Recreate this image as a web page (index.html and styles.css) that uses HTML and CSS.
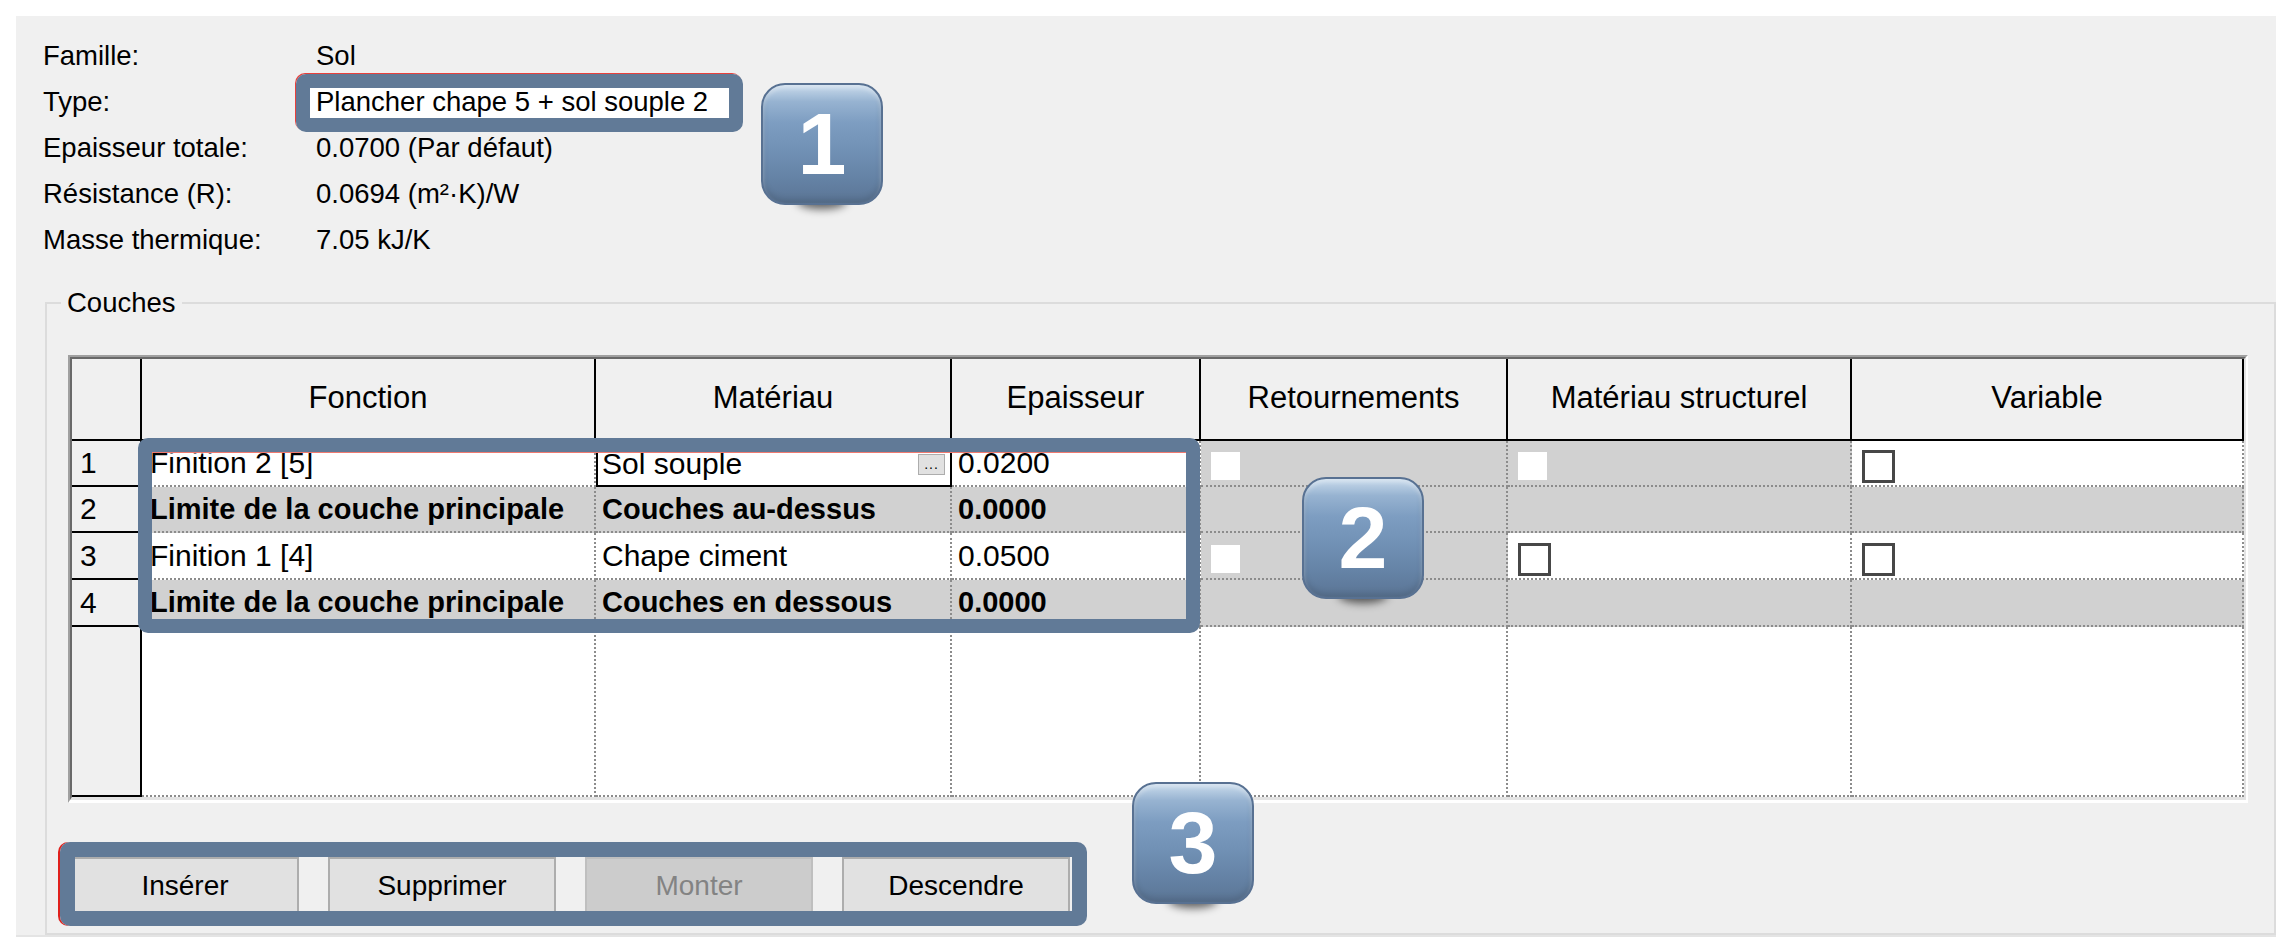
FILE: index.html
```html
<!DOCTYPE html>
<html lang="fr">
<head>
<meta charset="utf-8">
<title>Propriétés du type — Sol</title>
<link rel="stylesheet" href="styles.css">
</head>
<body>
<div class="page">
  <div class="panel">
    <div class="info">
      <div class="lbl">Famille:</div><div class="val">Sol</div>
      <div class="lbl">Type:</div><div class="val"><span class="typefield">Plancher chape 5 + sol souple 2</span></div>
      <div class="lbl">Epaisseur totale:</div><div class="val">0.0700 (Par défaut)</div>
      <div class="lbl">Résistance (R):</div><div class="val">0.0694 (m²·K)/W</div>
      <div class="lbl">Masse thermique:</div><div class="val">7.05 kJ/K</div>
    </div>

    <fieldset class="group">
      <legend class="group-title">Couches</legend>
      <div class="tframe">
        <div class="grid">
          <div class="c rh"></div>
          <div class="c h">Fonction</div>
          <div class="c h">Matériau</div>
          <div class="c h">Epaisseur</div>
          <div class="c h">Retournements</div>
          <div class="c h">Matériau structurel</div>
          <div class="c h">Variable</div>

          <div class="c rh">1</div>
          <div class="c fn">Finition 2 [5]</div>
          <div class="c edit"><span>Sol souple</span><span class="ellipsis">...</span></div>
          <div class="c">0.0200</div>
          <div class="c g chkcell"><span class="chk-off"></span></div>
          <div class="c g chkcell"><span class="chk-off"></span></div>
          <div class="c chkcell"><span class="chk"></span></div>

          <div class="c rh">2</div>
          <div class="c fn g b">Limite de la couche principale</div>
          <div class="c g b">Couches au-dessus</div>
          <div class="c g b">0.0000</div>
          <div class="c g"></div>
          <div class="c g"></div>
          <div class="c g"></div>

          <div class="c rh">3</div>
          <div class="c fn">Finition 1 [4]</div>
          <div class="c">Chape ciment</div>
          <div class="c">0.0500</div>
          <div class="c g chkcell"><span class="chk-off"></span></div>
          <div class="c chkcell"><span class="chk"></span></div>
          <div class="c chkcell"><span class="chk"></span></div>

          <div class="c rh">4</div>
          <div class="c fn g b">Limite de la couche principale</div>
          <div class="c g b">Couches en dessous</div>
          <div class="c g b">0.0000</div>
          <div class="c g"></div>
          <div class="c g"></div>
          <div class="c g"></div>

          <div class="c rh"></div>
          <div class="c"></div>
          <div class="c"></div>
          <div class="c"></div>
          <div class="c"></div>
          <div class="c"></div>
          <div class="c"></div>
        </div>
      </div>

      <div class="buttons">
        <button class="btn" type="button">Insérer</button>
        <button class="btn" type="button">Supprimer</button>
        <button class="btn btn-disabled" type="button" disabled>Monter</button>
        <button class="btn" type="button">Descendre</button>
      </div>
    </fieldset>
  </div>

  <div class="hl hl-type"></div>
  <div class="hl hl-layers"></div>
  <div class="hl hl-buttons"></div>

  <div class="badge badge-1"><div class="badge-face">1</div></div>
  <div class="badge badge-2"><div class="badge-face">2</div></div>
  <div class="badge badge-3"><div class="badge-face">3</div></div>
</div>
</body>
</html>
```

FILE: styles.css
```css
* { box-sizing: border-box; }

html, body {
  margin: 0;
  padding: 0;
  background: #ffffff;
}

body {
  font-family: "Liberation Sans", Arial, sans-serif;
  color: #000000;
}

.page {
  position: relative;
  width: 2292px;
  height: 952px;
  padding: 16px 0 0 16px;
  overflow: hidden;
}

.panel {
  width: 2260px;
  background: #f0f0f0;
  padding: 17px 0 0 0;
  border-bottom: 2px solid #e4e4e4;
}

/* ---------- header info ---------- */
.info {
  display: grid;
  grid-template-columns: 273px auto;
  padding-left: 27px;
  font-size: 27.5px;
  line-height: 46px;
}

.lbl,
.val {
  height: 46px;
  white-space: nowrap;
}

.val {
  display: flex;
  align-items: center;
}

.typefield {
  display: block;
  width: 432px;
  height: 40px;
  line-height: 40px;
  margin-left: -12px;
  padding-left: 12px;
  background: #ffffff;
}

/* ---------- group box ---------- */
.group {
  margin: 25px 0 0 29px;
  padding: 37px 24px 19px 21px;
  border: 2px solid #dcdcdc;
  min-width: 0;
}

.group-title {
  font-size: 27.5px;
  line-height: 30px;
  padding: 0 6px;
  margin-left: -7px;
}

/* ---------- table ---------- */
.tframe {
  width: 2180px;
  border-style: solid;
  border-width: 2px 2px 3px 2px;
  border-color: #a0a0a0 #ffffff #ffffff #a0a0a0;
  background: #ffffff;
}

.grid {
  display: grid;
  grid-template-columns: 70px 454px 356px 249px 307px 344px 392px;
  grid-template-rows: 82px 46px 46px 47px 47px 170px;
  border-style: solid;
  border-width: 2px 2px 3px 2px;
  border-color: #696969 #e3e3e3 #e3e3e3 #696969;
  background: #ffffff;
  font-size: 30px;
}

.c {
  display: flex;
  align-items: center;
  padding-left: 6px;
  border-right: 2px dotted #8c8c8c;
  border-bottom: 2px dotted #8c8c8c;
  white-space: nowrap;
  overflow: hidden;
  background: #ffffff;
}

.h {
  justify-content: center;
  padding: 0 0 2px 0;
  background: #f0f0f0;
  border-right: 2px solid #000000;
  border-bottom: 2px solid #000000;
  font-size: 31px;
}

.rh {
  padding-left: 8px;
  background: #f0f0f0;
  border-right: 2px solid #000000;
  border-bottom: 2px solid #000000;
}

.fn { padding-left: 8px; }

.g { background: #d1d1d1; }

.b {
  font-weight: bold;
  font-size: 29px;
}

.edit {
  justify-content: space-between;
  padding: 0 5px 0 4px;
  border: 2px solid #000000;
  background: #ffffff;
}

.ellipsis {
  display: flex;
  justify-content: center;
  align-items: flex-end;
  width: 27px;
  height: 21px;
  padding-bottom: 3px;
  background: #e1e1e1;
  border: 1px solid #adadad;
  font-size: 14px;
  line-height: 1;
  letter-spacing: 1px;
}

.chkcell {
  padding-left: 10px;
}

.chk-off {
  display: block;
  width: 29px;
  height: 28px;
  margin-top: 6px;
  background: #ffffff;
}

.chk {
  display: block;
  width: 33px;
  height: 33px;
  margin-top: 7px;
  background: #ffffff;
  border: 3px solid #474747;
}

/* ---------- buttons ---------- */
.buttons {
  display: flex;
  gap: 29px;
  margin: 54px 0 0 3px;
}

.btn {
  width: 228px;
  height: 57px;
  padding: 0;
  background: #e1e1e1;
  border: 2px solid #adadad;
  font-family: "Liberation Sans", Arial, sans-serif;
  font-size: 28px;
  color: #000000;
}

.btn-disabled {
  background: #cccccc;
  border-color: #bfbfbf;
  color: #838383;
}

/* ---------- annotation overlays ---------- */
.hl {
  position: absolute;
  border: 14px solid #617a97;
  border-radius: 10px;
}

.hl-type {
  left: 296px;
  top: 74px;
  width: 447px;
  height: 58px;
  box-shadow: -1px -1px 0 #e8403c;
}

.hl-layers {
  left: 138px;
  top: 438px;
  width: 1062px;
  height: 195px;
  box-shadow: inset 0 1px 0 #f07a70;
}

.hl-buttons {
  left: 60px;
  top: 842px;
  width: 1027px;
  height: 84px;
  border-width: 15px;
  box-shadow: -2px 0 0 #e0201c;
}

.badge {
  position: absolute;
  width: 122px;
  height: 122px;
}

.badge::before {
  content: "";
  position: absolute;
  left: 36px;
  right: 36px;
  top: 110px;
  height: 16px;
  border-radius: 50%;
  background: rgba(0, 0, 0, 0.6);
  filter: blur(4px);
}

.badge-face {
  position: relative;
  width: 100%;
  height: 100%;
  display: flex;
  align-items: center;
  justify-content: center;
  border-radius: 24px;
  border: 2px solid #587192;
  background: linear-gradient(to bottom, #c9dbec 0%, #97b3d1 14%, #7d9dc1 32%, #7191b5 55%, #6583a6 78%, #5b7595 100%);
  box-shadow: inset 0 3px 4px rgba(255, 255, 255, 0.35), inset 0 -4px 6px rgba(0, 0, 0, 0.12);
  color: #ffffff;
  font-family: "Liberation Sans", Arial, sans-serif;
  font-weight: bold;
  font-size: 88px;
  line-height: 1;
}

.badge-1 { left: 761px; top: 83px; }
.badge-2 { left: 1302px; top: 477px; }
.badge-3 { left: 1132px; top: 782px; }
```
